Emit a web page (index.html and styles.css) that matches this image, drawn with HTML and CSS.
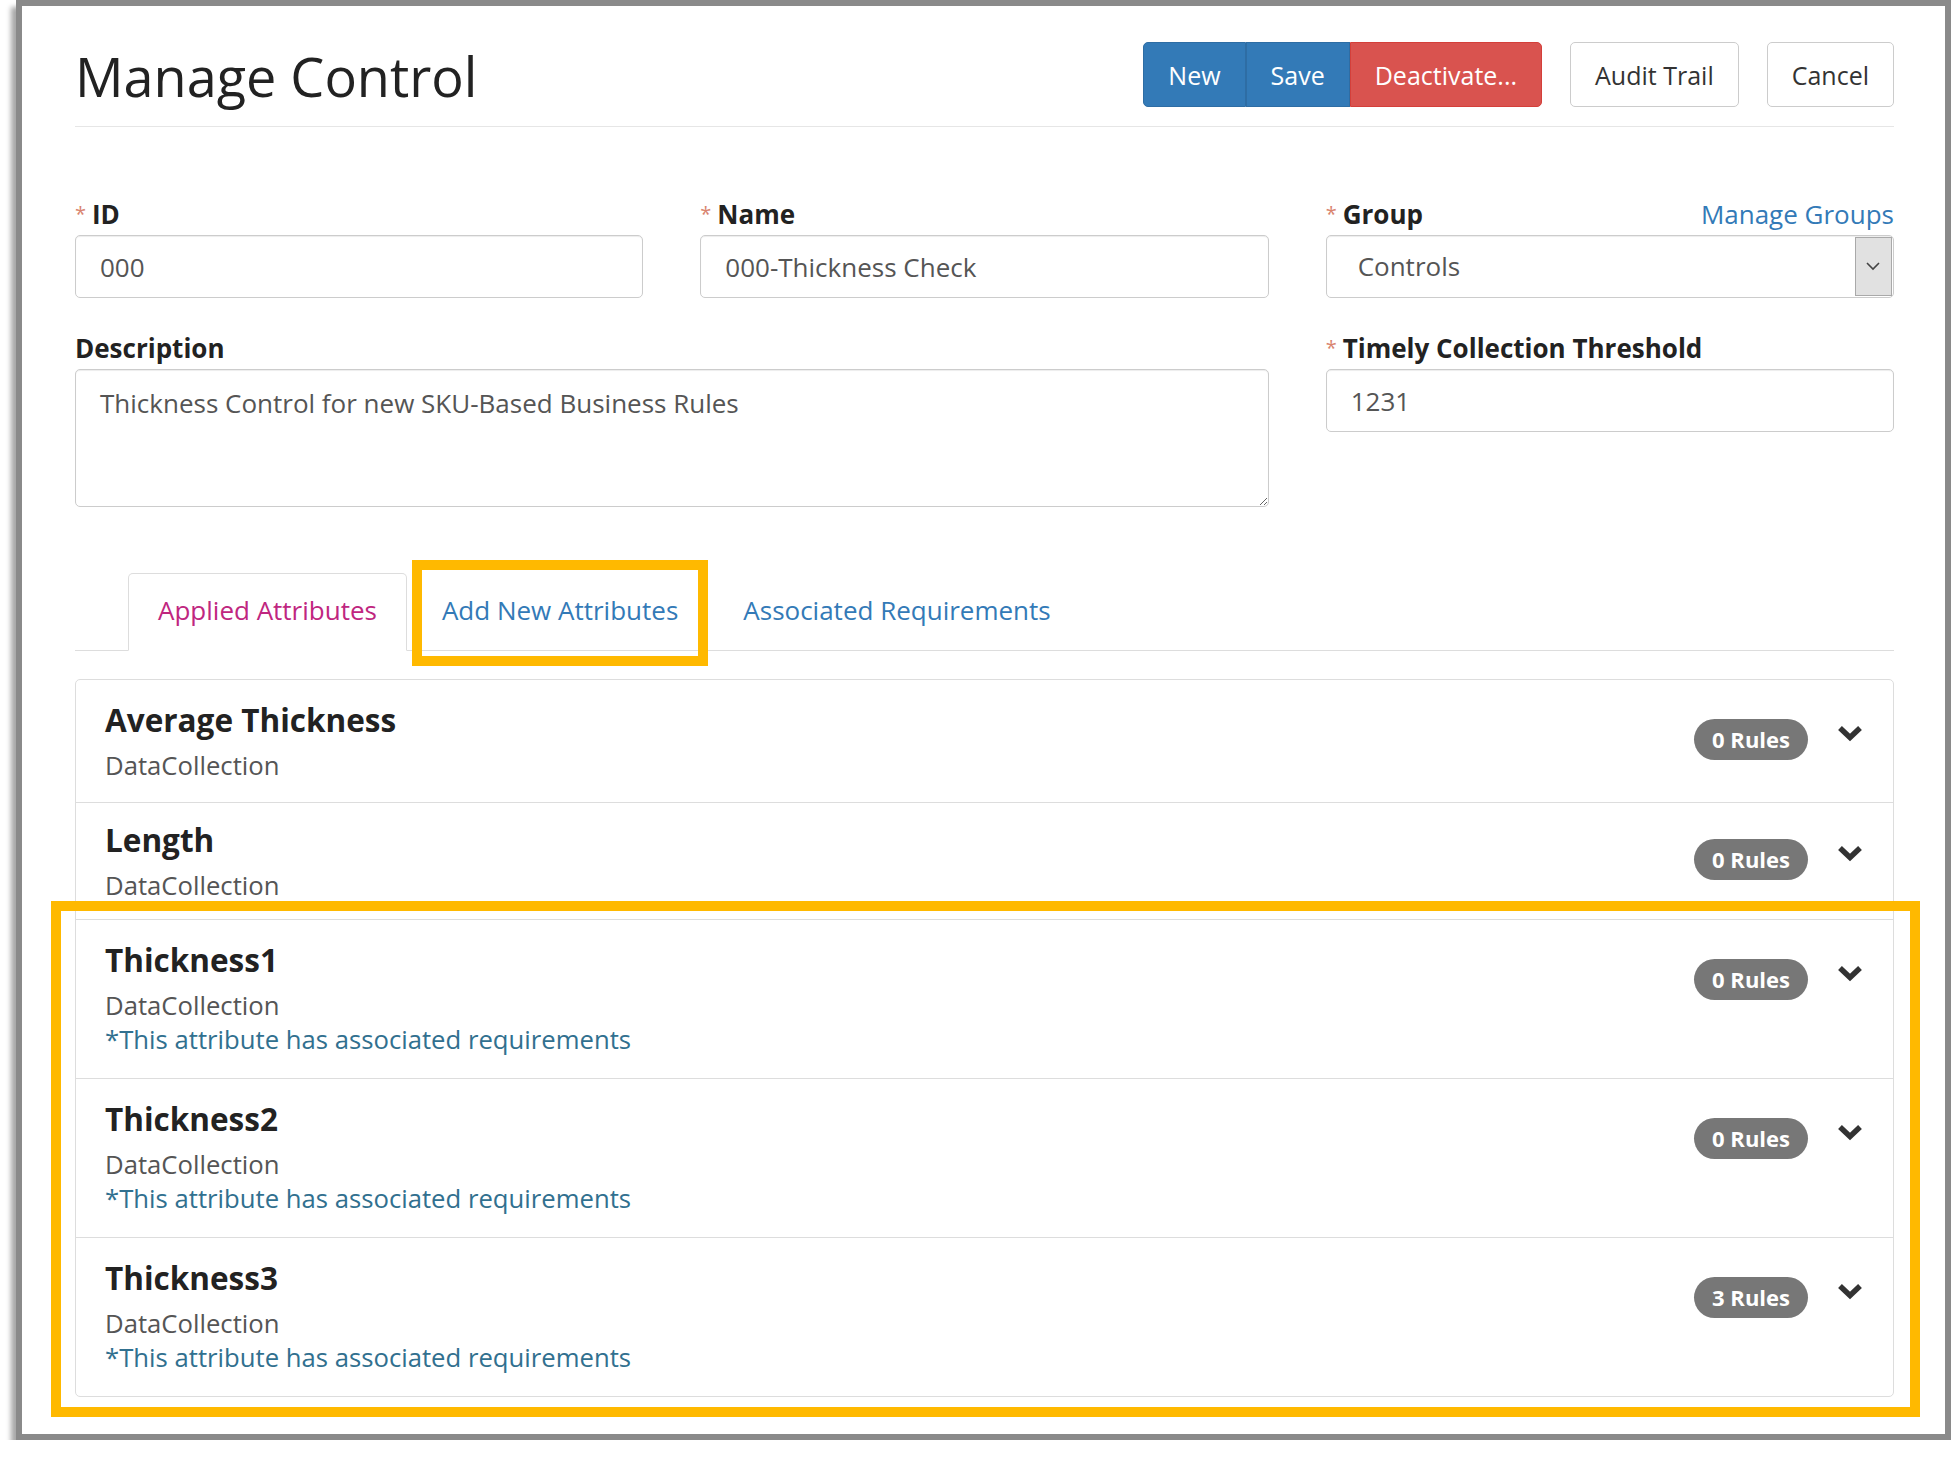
FILE: index.html
```html
<!DOCTYPE html>
<html lang="en">
<head>
    <meta charset="UTF-8">
    <meta name="viewport" content="width=device-width, initial-scale=1.0">
    <title>Manage Control</title>
    <link rel="stylesheet" href="styles.css">
</head>
<body>
    <div class="frame">
        <div class="page-header">
            <h1>Manage Control</h1>
            <div class="actions">
                <div class="btn-group">
                    <button class="btn btn-primary">New</button>
                    <button class="btn btn-primary">Save</button>
                    <button class="btn btn-danger">Deactivate...</button>
                </div>
                <button class="btn">Audit Trail</button>
                <button class="btn">Cancel</button>
            </div>
        </div>

        <form class="form">
            <div class="field">
                <label class="label"><span class="req">*</span>ID</label>
                <input class="input" type="text" value="000">
            </div>
            <div class="field">
                <label class="label"><span class="req">*</span>Name</label>
                <input class="input" type="text" value="000-Thickness Check">
            </div>
            <div class="field">
                <div class="label-row">
                    <label class="label"><span class="req">*</span>Group</label>
                    <a href="#" class="link">Manage Groups</a>
                </div>
                <div class="select">
                    <span class="select-value">Controls</span>
                    <span class="select-arrow">
                        <svg width="14" height="9" viewBox="0 0 14 9"><polyline points="1,1 7,7 13,1" fill="none" stroke="#444" stroke-width="1.6"/></svg>
                    </span>
                </div>
            </div>
            <div class="field wide">
                <label class="label">Description</label>
                <textarea class="input textarea">Thickness Control for new SKU-Based Business Rules</textarea>
            </div>
            <div class="field">
                <label class="label"><span class="req">*</span>Timely Collection Threshold</label>
                <input class="input" type="text" value="1231">
            </div>
        </form>

        <ul class="tabs">
            <li><a href="#" class="tab active">Applied Attributes</a></li>
            <li><a href="#" class="tab marked">Add New Attributes</a></li>
            <li><a href="#" class="tab">Associated Requirements</a></li>
        </ul>

        <div class="attributes">
            <div class="attr-list">
                <div class="attr-row">
                    <div>
                        <div class="attr-name">Average Thickness</div>
                        <div class="attr-type">DataCollection</div>
                    </div>
                    <div class="attr-meta">
                        <span class="badge">0 Rules</span>
                        <svg class="chevron" width="26" height="17" viewBox="0 0 26 17"><polyline points="3,3 13,12.5 23,3" fill="none" stroke="#333" stroke-width="5.5"/></svg>
                    </div>
                </div>
                <div class="attr-row compact">
                    <div>
                        <div class="attr-name">Length</div>
                        <div class="attr-type">DataCollection</div>
                    </div>
                    <div class="attr-meta">
                        <span class="badge">0 Rules</span>
                        <svg class="chevron" width="26" height="17" viewBox="0 0 26 17"><polyline points="3,3 13,12.5 23,3" fill="none" stroke="#333" stroke-width="5.5"/></svg>
                    </div>
                </div>
                <div class="attr-row">
                    <div>
                        <div class="attr-name">Thickness1</div>
                        <div class="attr-type">DataCollection</div>
                        <div class="attr-note">*This attribute has associated requirements</div>
                    </div>
                    <div class="attr-meta">
                        <span class="badge">0 Rules</span>
                        <svg class="chevron" width="26" height="17" viewBox="0 0 26 17"><polyline points="3,3 13,12.5 23,3" fill="none" stroke="#333" stroke-width="5.5"/></svg>
                    </div>
                </div>
                <div class="attr-row">
                    <div>
                        <div class="attr-name">Thickness2</div>
                        <div class="attr-type">DataCollection</div>
                        <div class="attr-note">*This attribute has associated requirements</div>
                    </div>
                    <div class="attr-meta">
                        <span class="badge">0 Rules</span>
                        <svg class="chevron" width="26" height="17" viewBox="0 0 26 17"><polyline points="3,3 13,12.5 23,3" fill="none" stroke="#333" stroke-width="5.5"/></svg>
                    </div>
                </div>
                <div class="attr-row">
                    <div>
                        <div class="attr-name">Thickness3</div>
                        <div class="attr-type">DataCollection</div>
                        <div class="attr-note">*This attribute has associated requirements</div>
                    </div>
                    <div class="attr-meta">
                        <span class="badge">3 Rules</span>
                        <svg class="chevron" width="26" height="17" viewBox="0 0 26 17"><polyline points="3,3 13,12.5 23,3" fill="none" stroke="#333" stroke-width="5.5"/></svg>
                    </div>
                </div>
            </div>
            <!-- annotation box around the attributes with requirements -->
            <div class="highlight"></div>
        </div>
    </div>
</body>
</html>
```

FILE: styles.css
```css
* {
    margin: 0;
    padding: 0;
    box-sizing: border-box;
}

body {
    background-color: #fff;
    font-family: "Open Sans", "Noto Sans", sans-serif;
    font-size: 26px;
    color: #333;
}

/* screenshot frame */
.frame {
    width: 1935px;
    height: 1440px;
    margin-left: 16px;
    border: 6px solid #8a8a8a;
    box-shadow: -5px 7px 5px rgba(0,0,0,0.35);
    background-color: #fff;
    padding: 36px 51px 0 53px;
}

.page-header {
    display: flex;
    justify-content: space-between;
    align-items: flex-start;
    padding-bottom: 18px;
    border-bottom: 1px solid #e6e6e6;
}

h1 {
    font-size: 54px;
    font-weight: 400;
    line-height: 64px;
    margin-top: 2px;
    color: #222;
}

.actions {
    display: flex;
    gap: 28px;
}

.btn-group {
    display: flex;
}

.btn {
    height: 65px;
    padding: 0 24px;
    font-family: inherit;
    font-size: 25px;
    border: 1px solid #ccc;
    border-radius: 5px;
    background-color: #fff;
    color: #333;
    cursor: pointer;
}

.btn-group .btn {
    border-radius: 0;
}

.btn-group .btn:first-child {
    border-radius: 5px 0 0 5px;
}

.btn-group .btn:last-child {
    border-radius: 0 5px 5px 0;
}

.btn-primary {
    background-color: #337ab7;
    border-color: #2e6da4;
    color: #fff;
}

.btn-danger {
    background-color: #d9534f;
    border-color: #d43f3a;
    color: #fff;
}

/* form */
.form {
    margin-top: 69px;
    display: grid;
    grid-template-columns: repeat(3, 1fr);
    column-gap: 57px;
    row-gap: 32px;
}

.field.wide {
    grid-column: span 2;
}

.label-row {
    display: flex;
    justify-content: space-between;
}

.label {
    display: block;
    font-weight: 700;
    line-height: 36px;
    margin-bottom: 3px;
    color: #222;
}

.req {
    font-size: 20px;
    font-weight: 400;
    color: #d9846f;
    margin-right: 6px;
    vertical-align: top;
}

.link {
    color: #337ab7;
    text-decoration: none;
    line-height: 36px;
}

.input {
    display: block;
    width: 100%;
    height: 63px;
    padding: 0 24px;
    font-family: inherit;
    font-size: 26px;
    color: #555;
    border: 1px solid #ccc;
    border-radius: 5px;
    box-shadow: inset 0 1px 1px rgba(0,0,0,0.075);
}

.textarea {
    height: 138px;
    padding-top: 15px;
    line-height: 36px;
    resize: vertical;
}

.select {
    display: flex;
    height: 63px;
    border: 1px solid #ccc;
    border-radius: 5px;
    box-shadow: inset 0 1px 1px rgba(0,0,0,0.075);
}

.select-value {
    flex: 1;
    padding-left: 31px;
    line-height: 61px;
    color: #555;
}

.select-arrow {
    width: 37px;
    margin: 1px;
    background-color: #e1e1e1;
    border: 1px solid #a9a9a9;
    display: flex;
    align-items: center;
    justify-content: center;
}

/* tabs */
.tabs {
    list-style: none;
    display: flex;
    margin-top: 66px;
    padding-left: 53px;
    border-bottom: 1px solid #ddd;
}

.tabs li {
    margin-bottom: -1px;
    margin-right: 5px;
}

.tab {
    position: relative;
    display: block;
    padding: 18px 29px 22px;
    line-height: 36px;
    color: #337ab7;
    text-decoration: none;
    border: 1px solid transparent;
    border-radius: 5px 5px 0 0;
}

.tab.active {
    color: #c0267f;
    background-color: #fff;
    border-color: #ddd #ddd transparent;
}

.tab.marked::after {
    content: "";
    position: absolute;
    top: -14px;
    bottom: -16px;
    left: -1px;
    right: -1px;
    border: 10px solid #ffb900;
}

/* attribute list */
.attributes {
    position: relative;
    margin-top: 28px;
}

.attr-list {
    border: 1px solid #ddd;
    border-radius: 5px;
}

.attr-row {
    display: flex;
    justify-content: space-between;
    padding: 20px 30px 19px 29px;
}

.attr-row.compact {
    padding-top: 17px;
    padding-bottom: 16px;
}

.attr-row + .attr-row {
    border-top: 1px solid #ddd;
}

.attr-name {
    font-size: 31.5px;
    font-weight: 700;
    line-height: 40px;
    margin-bottom: 9px;
    color: #222;
}

.attr-type {
    font-size: 25.7px;
    line-height: 34px;
    color: #555;
}

.attr-note {
    font-size: 25.7px;
    line-height: 34px;
    margin-bottom: 2px;
    color: #31708f;
}

.attr-meta {
    display: flex;
    align-items: flex-start;
    gap: 29px;
}

.badge {
    margin-top: 19px;
    height: 41px;
    padding: 0 18px;
    border-radius: 21px;
    background-color: #777;
    color: #fff;
    font-size: 22px;
    font-weight: 700;
    line-height: 41px;
}

.chevron {
    margin-top: 25px;
}

.highlight {
    position: absolute;
    top: 222px;
    left: -24px;
    right: -26px;
    bottom: -20px;
    border: 10px solid #ffb900;
    pointer-events: none;
}
```
